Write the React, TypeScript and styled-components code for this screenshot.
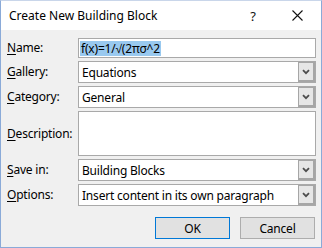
import styled, { createGlobalStyle } from "styled-components";

const GlobalStyle = createGlobalStyle`
  html, body {
    margin: 0;
    padding: 0;
    background: #ffffff;
  }
  * {
    box-sizing: border-box;
  }
`;

type FieldRow = {
  key: string;
  label: string;
  value: string;
  kind: "text" | "select" | "area";
};

const rows: FieldRow[] = [
  { key: "N", label: "ame:", value: "f(x)=1/√(2πσ^2", kind: "text" },
  { key: "G", label: "allery:", value: "Equations", kind: "select" },
  { key: "C", label: "ategory:", value: "General", kind: "select" },
  { key: "D", label: "escription:", value: "", kind: "area" },
  { key: "S", label: "ave in:", value: "Building Blocks", kind: "select" },
  {
    key: "O",
    label: "ptions:",
    value: "Insert content in its own paragraph",
    kind: "select",
  },
];

const Chevron = () => (
  <svg width="8" height="6" viewBox="0 0 8 6">
    <path d="M1 1.2 L4 4.2 L7 1.2" fill="none" stroke="#4d4d4d" strokeWidth="1.8" />
  </svg>
);

const CloseIcon = () => (
  <svg width="11" height="11" viewBox="0 0 11 11">
    <path d="M0.5 0.5 L10.5 10.5 M10.5 0.5 L0.5 10.5" stroke="#111" strokeWidth="1.1" />
  </svg>
);

const App = () => {
  return (
    <>
      <GlobalStyle />
      <Window>
        <TitleBar>
          <Title>Create New Building Block</Title>
          <TitleButtons>
            <HelpGlyph>?</HelpGlyph>
            <CloseIcon />
          </TitleButtons>
        </TitleBar>
        <Body>
          <Form>
            {rows.map((row) => (
              <Row key={row.key}>
                <Label>
                  <u>{row.key}</u>
                  {row.label}
                </Label>
                {row.kind === "text" && (
                  <TextBox>
                    <Selected>{row.value}</Selected>
                  </TextBox>
                )}
                {row.kind === "area" && <AreaBox />}
                {row.kind === "select" && (
                  <SelectBox>
                    <SelectValue>{row.value}</SelectValue>
                    <DropButton>
                      <Chevron />
                    </DropButton>
                  </SelectBox>
                )}
              </Row>
            ))}
          </Form>
          <Footer>
            <Button $primary>OK</Button>
            <Button>Cancel</Button>
          </Footer>
        </Body>
      </Window>
    </>
  );
};

export default App;

const Window = styled.div`
  width: 322px;
  height: 248px;
  display: flex;
  flex-direction: column;
  border: 1px solid #8aaad8;
  border-top-color: #c9d6ea;
  background: #f0f0f0;
  font-family: "Noto Sans", "Segoe UI", sans-serif;
  font-size: 12px;
  color: #000;
`;

const TitleBar = styled.div`
  height: 29px;
  background: #ffffff;
  display: flex;
  align-items: center;
  justify-content: space-between;
  padding: 0 18px 0 8px;
`;

const Title = styled.div`
  font-size: 12px;
  color: #000;
  padding-bottom: 1px;
`;

const TitleButtons = styled.div`
  display: flex;
  align-items: center;
  gap: 36px;
`;

const HelpGlyph = styled.span`
  font-size: 13px;
  color: #111;
`;

const Body = styled.div`
  flex: 1;
  display: flex;
  flex-direction: column;
  padding: 8px 5px 0 6px;
  letter-spacing: -0.2px;
`;

const Form = styled.div`
  display: flex;
  flex-direction: column;
  gap: 3px;
`;

const Row = styled.div`
  display: grid;
  grid-template-columns: 71px 1fr;
  align-items: center;
`;

const Label = styled.div`
  line-height: 14px;
  white-space: nowrap;
  u {
    text-decoration-thickness: 1px;
    text-underline-offset: 2px;
  }
`;

const TextBox = styled.div`
  height: 20px;
  border: 1px solid #a9a9a9;
  background: #fff;
  display: flex;
  align-items: center;
  padding: 0 1px;
`;

const Selected = styled.span`
  background: #99c9ef;
  line-height: 15px;
  padding: 0 1px;
`;

const AreaBox = styled.div`
  height: 45px;
  border: 1px solid #a9a9a9;
  background: #fff;
`;

const SelectBox = styled.div`
  height: 22px;
  border: 1px solid #a9a9a9;
  background: #fff;
  display: flex;
  align-items: stretch;
`;

const SelectValue = styled.div`
  flex: 1;
  display: flex;
  align-items: center;
  padding-left: 3px;
  white-space: nowrap;
  overflow: hidden;
`;

const DropButton = styled.div`
  width: 17px;
  background: #e6e6e6;
  border: 1px solid #a6a6a6;
  border-right-width: 2px;
  border-bottom-width: 2px;
  display: flex;
  align-items: center;
  justify-content: center;
`;

const Footer = styled.div`
  display: flex;
  justify-content: flex-end;
  gap: 10px;
  margin-top: 11px;
  padding-right: 1px;
`;

const Button = styled.div<{ $primary?: boolean }>`
  width: 75px;
  height: 22px;
  display: flex;
  align-items: center;
  justify-content: center;
  background: #e1e1e1;
  border: 1px solid ${(p) => (p.$primary ? "#0078d7" : "#adadad")};
  font-size: 12px;
`;
